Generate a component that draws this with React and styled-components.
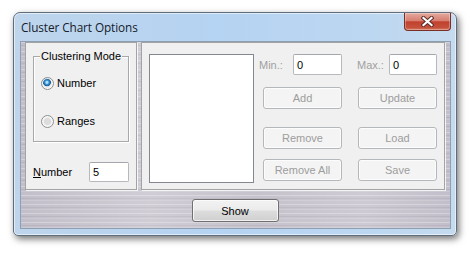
import React from 'react';
import styled, { createGlobalStyle } from 'styled-components';

const Global = createGlobalStyle`
  html, body {
    margin: 0;
    background: #ffffff;
  }
  body {
    font-family: "Liberation Sans", Arial, sans-serif;
  }
`

const Page = styled.div`
  padding: 12px 0 0 13px;
  width: 476px;
  height: 256px;
  box-sizing: border-box;
`

const Window = styled.div`
  width: 444px;
  height: 224px;
  box-sizing: border-box;
  display: flex;
  flex-direction: column;
  padding: 0 5px 6px 6px;
  border: 1px solid #5f6d7c;
  border-radius: 7px 7px 5px 5px;
  background: linear-gradient(90deg, #bed5ec 0%, #b5d3f2 45%, #bcd7f1 80%, #c5dbef 100%);
  box-shadow: inset 0 0 0 1px rgba(255, 255, 255, 0.55), 2px 3px 7px rgba(0, 0, 0, 0.55);
`

const TitleBar = styled.div`
  height: 28px;
  flex: none;
  display: flex;
  justify-content: space-between;
  align-items: flex-start;
`

const Title = styled.div`
  font-family: "Open Sans", "Noto Sans", sans-serif;
  font-size: 11.8px;
  color: #15202b;
  padding: 6px 0 0 1px;
  letter-spacing: -0.1px;
`

const CloseButton = styled.div`
  width: 47px;
  height: 18px;
  box-sizing: border-box;
  border: 1px solid #7a2f26;
  border-top: none;
  border-radius: 0 0 4px 4px;
  background: linear-gradient(180deg, #e3aa9f 0%, #d77f70 45%, #c2412f 52%, #c4503b 85%, #d77a5f 100%);
  box-shadow: inset 0 0 0 1px rgba(255, 255, 255, 0.3);
  display: flex;
  align-items: center;
  justify-content: center;
`

const Client = styled.div`
  flex: 1;
  display: flex;
  flex-direction: column;
  border: 1px solid #8d9fb2;
  padding: 0 5px 0 4px;
  background:
    linear-gradient(90deg, rgba(255, 255, 255, 0) 0%, rgba(255, 255, 255, 0.22) 30%, rgba(255, 255, 255, 0.05) 55%, rgba(255, 255, 255, 0.18) 80%, rgba(255, 255, 255, 0) 100%),
    repeating-linear-gradient(180deg, rgba(255, 255, 255, 0.28) 0 1px, rgba(0, 0, 0, 0) 1px 3px, rgba(60, 50, 80, 0.08) 3px 4px, rgba(0, 0, 0, 0) 4px 5px, rgba(255, 255, 255, 0.14) 5px 6px, rgba(0, 0, 0, 0) 6px 9px),
    #c3bfca;
`

const PanelRow = styled.div`
  display: flex;
  gap: 4px;
  height: 148px;
`

const Panel = styled.div`
  box-sizing: border-box;
  background: #f0f0f0;
  border: 1px solid #a3a3a3;
  box-shadow: 1px 1px 0 rgba(255, 255, 255, 0.8);
`

const LeftPanel = styled(Panel)`
  width: 112px;
  display: flex;
  flex-direction: column;
  padding: 13px 7px 7px 7px;
`

const GroupBox = styled.div`
  position: relative;
  height: 86px;
  box-sizing: border-box;
  border: 1px solid #a8a8a8;
  box-shadow: inset 1px 1px 0 #ffffff, 1px 1px 0 #ffffff;
  padding: 19px 0 0 7px;
  display: flex;
  flex-direction: column;
  gap: 24px;
`

const Legend = styled.span`
  position: absolute;
  top: -8px;
  left: 6px;
  padding: 0 1px;
  background: #f0f0f0;
  font-size: 11px;
  color: #000;
  line-height: 14px;
`

const RadioRow = styled.label`
  display: flex;
  align-items: center;
  gap: 3px;
  font-size: 11px;
  color: #000;
  height: 14px;
`

const RadioDot = styled.span`
  width: 13px;
  height: 13px;
  box-sizing: border-box;
  border-radius: 50%;
  border: 1px solid #8e8f8f;
  background: ${props => props.$checked
    ? 'radial-gradient(circle at 45% 40%, #a9e0ff 0 1px, #3b95d6 2px, #1a5c94 3.6px, #e8e8e8 4.2px, #f4f4f4 100%)'
    : 'radial-gradient(circle at 50% 50%, #dcdcdc 0 3px, #eeeeee 4px, #f6f6f6 100%)'};
  box-shadow: inset 0 0 0 1px rgba(255, 255, 255, 0.7);
`

const NumberRow = styled.div`
  margin-top: auto;
  display: flex;
  align-items: center;
  justify-content: space-between;
`

const Label = styled.span`
  font-size: 11px;
  color: ${props => props.$disabled ? '#a0a0a0' : '#000'};
`

const TextBox = styled.div`
  width: ${props => props.$w}px;
  height: ${props => props.$h || 21}px;
  box-sizing: border-box;
  border: 1px solid #b5b9be;
  border-top-color: #a3a7ad;
  border-radius: 2px;
  background: #fff;
  font-size: 11px;
  color: #000;
  padding: 0 0 0 3px;
  display: flex;
  align-items: center;
`

const RightPanel = styled(Panel)`
  width: 304px;
  display: flex;
  gap: 5px;
  padding: 11px 7px 6px 7px;
`

const ListBox = styled.div`
  width: 105px;
  box-sizing: border-box;
  border: 1px solid #828790;
  background: #fff;
`

const Controls = styled.div`
  display: flex;
  gap: 15px;
`

const Column = styled.div`
  width: ${props => props.$w}px;
  display: flex;
  flex-direction: column;
  align-items: flex-end;
`

const FieldRow = styled.div`
  width: 100%;
  display: flex;
  align-items: center;
  justify-content: space-between;
`

const Button = styled.div`
  margin-top: ${props => props.$mt || 0}px;
  width: ${props => props.$w || 79}px;
  height: ${props => props.$h || 22}px;
  box-sizing: border-box;
  border: 1px solid ${props => props.$disabled ? '#b4b8bb' : '#707070'};
  border-radius: 3px;
  background: ${props => props.$disabled
    ? '#f4f4f4'
    : 'linear-gradient(180deg, #f2f2f2 0%, #ebebeb 48%, #dddddd 52%, #cfcfcf 100%)'};
  box-shadow: inset 0 0 0 1px rgba(255, 255, 255, 0.7);
  display: flex;
  align-items: center;
  justify-content: center;
  font-size: 11px;
  color: ${props => props.$disabled ? '#9d9d9d' : '#000'};
`

const Footer = styled.div`
  flex: 1;
  display: flex;
  justify-content: center;
  align-items: flex-start;
  padding-top: 9px;
`

const CloseIcon = () => (
  <svg width="13" height="11" viewBox="0 0 13 11">
    <path d="M2.5 2 L10.5 9 M10.5 2 L2.5 9" stroke="#5a2a24" strokeWidth="4" strokeLinecap="square" />
    <path d="M2.5 2 L10.5 9 M10.5 2 L2.5 9" stroke="#ffffff" strokeWidth="2.2" strokeLinecap="square" />
  </svg>
)

export default function App() {
  return (
    <Page>
      <Global />
      <Window>
        <TitleBar>
          <Title>Cluster Chart Options</Title>
          <CloseButton><CloseIcon /></CloseButton>
        </TitleBar>
        <Client>
          <PanelRow>
            <LeftPanel>
              <GroupBox>
                <Legend>Clustering Mode</Legend>
                <RadioRow><RadioDot $checked />Number</RadioRow>
                <RadioRow><RadioDot />Ranges</RadioRow>
              </GroupBox>
              <NumberRow>
                <Label><u>N</u>umber</Label>
                <TextBox $w={40} $h={20}>5</TextBox>
              </NumberRow>
            </LeftPanel>
            <RightPanel>
              <ListBox />
              <Controls>
                <Column $w={83}>
                  <FieldRow>
                    <Label $disabled>Min.:</Label>
                    <TextBox $w={49}>0</TextBox>
                  </FieldRow>
                  <Button $disabled $mt={12}>Add</Button>
                  <Button $disabled $mt={18}>Remove</Button>
                  <Button $disabled $mt={10}>Remove All</Button>
                </Column>
                <Column $w={80}>
                  <FieldRow>
                    <Label $disabled>Max.:</Label>
                    <TextBox $w={48}>0</TextBox>
                  </FieldRow>
                  <Button $disabled $mt={12}>Update</Button>
                  <Button $disabled $mt={18}>Load</Button>
                  <Button $disabled $mt={10}>Save</Button>
                </Column>
              </Controls>
            </RightPanel>
          </PanelRow>
          <Footer>
            <Button $w={87} $h={23}>Show</Button>
          </Footer>
        </Client>
      </Window>
    </Page>
  );
}
